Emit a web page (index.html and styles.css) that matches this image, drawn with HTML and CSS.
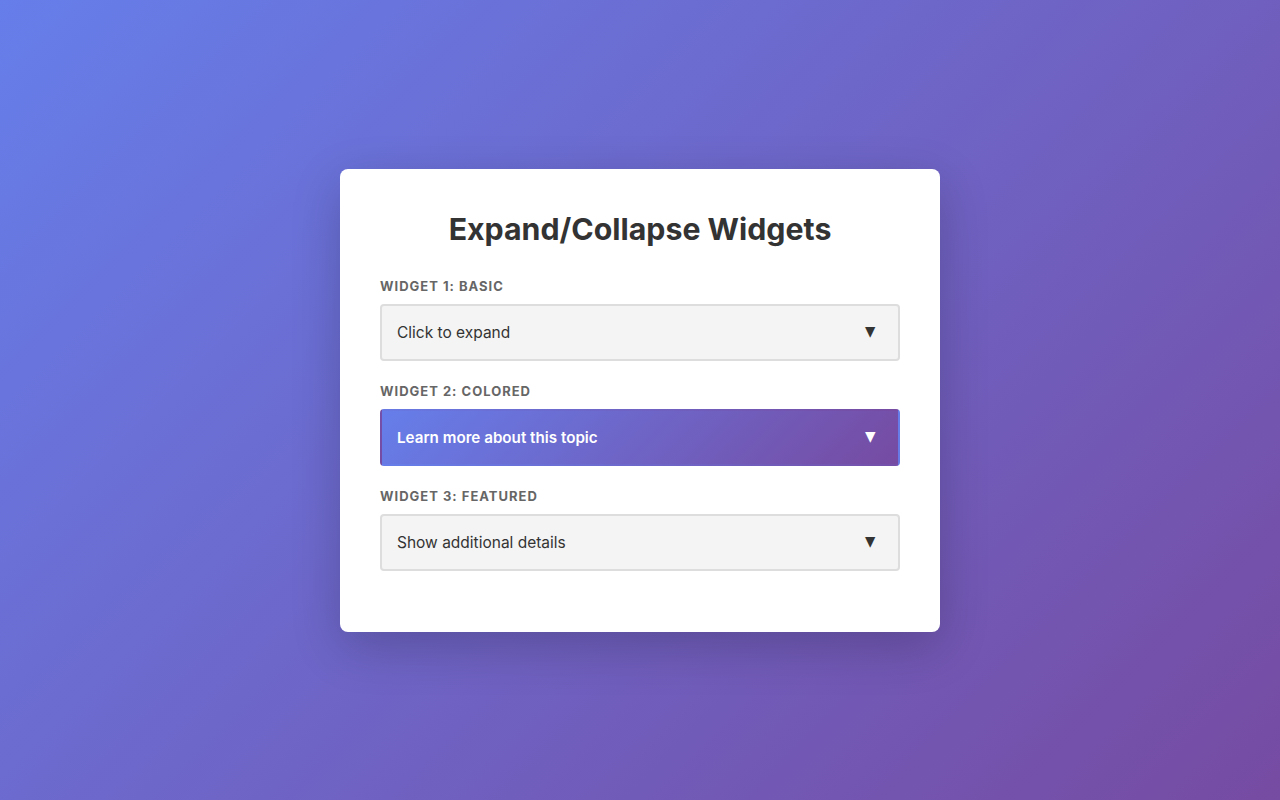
FILE: index.html
```html
<!DOCTYPE html>
<html>
<head>
<title>Expand/Collapse Widgets</title>
<link rel="stylesheet" href="styles.css">
</head>
<body>
    <div class="card">
        <h1 class="title">Expand/Collapse Widgets</h1>

        <div class="widget">
            <span class="widget-label">Widget 1: Basic</span>
            <div class="toggle">
                <span>Click to expand</span>
                <span class="arrow">▼</span>
            </div>
        </div>

        <div class="widget">
            <span class="widget-label">Widget 2: Colored</span>
            <div class="toggle toggle-colored">
                <span>Learn more about this topic</span>
                <span class="arrow">▼</span>
            </div>
        </div>

        <div class="widget">
            <span class="widget-label">Widget 3: Featured</span>
            <div class="toggle">
                <span>Show additional details</span>
                <span class="arrow">▼</span>
            </div>
        </div>
    </div>
</body>
</html>
```

FILE: styles.css
```css
html, body {
    margin: 0;
    height: 100%;
}
body {
    display: flex;
    align-items: center;
    justify-content: center;
    background: linear-gradient(135deg, #667eea 0%, #764ba2 100%);
    font-family: Inter, "Noto Sans", "Liberation Sans", sans-serif;
}
.card {
    width: 600px;
    box-sizing: border-box;
    padding: 42px 40px 39px;
    background-color: #fff;
    border-radius: 8px;
    box-shadow: 0 15px 50px rgba(0, 0, 0, 0.2);
}
.title {
    margin: 0 0 31px;
    text-align: center;
    font-size: 30.3px;
    line-height: 36px;
    font-weight: 700;
    color: #333;
}
.widget {
    margin-bottom: 22px;
}
.widget-label {
    display: block;
    margin-bottom: 10px;
    font-size: 13px;
    line-height: 16px;
    font-weight: 700;
    letter-spacing: 1px;
    text-transform: uppercase;
    color: #666;
}
.toggle {
    display: flex;
    justify-content: space-between;
    align-items: center;
    padding: 16px 21px 16px 15px;
    font-size: 15.5px;
    line-height: 21px;
    color: #333;
    background-color: #f4f4f4;
    border: 2px solid #ddd;
    border-radius: 4px;
    cursor: pointer;
}
.toggle-colored {
    color: #fff;
    font-weight: 600;
    font-size: 15.2px;
    background: linear-gradient(135deg, #667eea 0%, #764ba2 100%);
    border-color: transparent;
}
.arrow {
    display: inline-block;
    font-size: 14px;
    transform: scaleX(0.8);
}
```
